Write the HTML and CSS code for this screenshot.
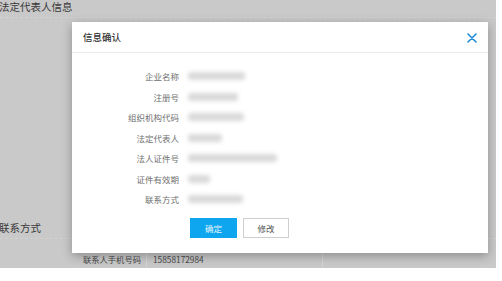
FILE: index.html
```html
<!DOCTYPE html>
<html lang="zh">
<head>
<meta charset="utf-8">
<link rel="stylesheet" href="styles.css">
</head>
<body>
<div class="screen">
  <div class="sec-title">法定代表人信息</div>
  <div class="sec-line"></div>
  <div class="sec-title sec-contact">联系方式</div>
  <div class="sec-line"></div>
  <div class="trow">
    <div class="tcell tlabel">联系人手机号码</div>
    <div class="tcell tvalue">15858172984</div>
  </div>

  <div class="modal">
    <div class="modal-head">
      <span class="modal-title">信息确认</span>
      <svg class="close" width="10" height="10" viewBox="0 0 10 10"><path d="M1 1L9 9M9 1L1 9" stroke="#1f8ad8" stroke-width="1.6" fill="none" stroke-linecap="round"/></svg>
    </div>
    <div class="modal-body">
      <div class="info">
        <div class="lbl">企业名称</div><div class="val"><span class="blur" style="width:57px"></span></div>
        <div class="lbl">注册号</div><div class="val"><span class="blur" style="width:50px"></span></div>
        <div class="lbl">组织机构代码</div><div class="val"><span class="blur" style="width:56px"></span></div>
        <div class="lbl">法定代表人</div><div class="val"><span class="blur" style="width:34px"></span></div>
        <div class="lbl">法人证件号</div><div class="val"><span class="blur" style="width:89px"></span></div>
        <div class="lbl">证件有效期</div><div class="val"><span class="blur" style="width:22px"></span></div>
        <div class="lbl">联系方式</div><div class="val"><span class="blur" style="width:55px"></span></div>
      </div>
      <div class="btns">
        <button class="btn btn-primary">确定</button>
        <button class="btn btn-default">修改</button>
      </div>
    </div>
  </div>
</div>
</body>
</html>
```

FILE: styles.css
```css
html, body {
  margin: 0;
  padding: 0;
  background: #ffffff;
}
body {
  font-family: "Noto Sans CJK SC", "Noto Sans", sans-serif;
}
.screen {
  position: relative;
  width: 496px;
  height: 268px;
  background: #c9c9c9;
  overflow: hidden;
  display: flex;
  flex-direction: column;
}
.sec-title {
  font-size: 10.5px;
  line-height: 14px;
  height: 14px;
  color: #3a3a3a;
  margin-left: -1px;
  white-space: nowrap;
}
.sec-line {
  margin-top: 3px;
  border-bottom: 1px dashed #d2d2d2;
  width: 100%;
}
.sec-contact {
  margin-top: 203px;
}
.trow {
  margin-top: 13px;
  height: 15px;
  display: flex;
  margin-left: 72px;
}
.tcell {
  font-size: 8.3px;
  line-height: 15px;
  color: #4a4a4a;
  white-space: nowrap;
}
.tlabel {
  width: 75px;
  text-align: right;
  padding-right: 5px;
  box-sizing: border-box;
  border-right: 1px solid #d6d6d6;
}
.tvalue {
  width: 176px;
  padding-left: 6px;
  box-sizing: border-box;
  border-right: 1px solid #d6d6d6;
}
.modal {
  position: absolute;
  left: 72px;
  top: 22px;
  width: 416px;
  height: 231px;
  background: #ffffff;
  box-shadow: 0 3px 10px rgba(0, 0, 0, 0.3);
  box-sizing: border-box;
}
.modal-head {
  height: 31px;
  box-sizing: border-box;
  border-bottom: 1px solid #eaeaea;
  display: flex;
  align-items: center;
  justify-content: space-between;
  padding: 0 11px 0 11px;
}
.modal-title {
  font-size: 9.5px;
  font-weight: 500;
  color: #333333;
}
.close {
  display: block;
  margin-top: 2px;
}
.modal-body {
  padding-top: 13px;
}
.info {
  display: grid;
  grid-template-columns: 107px auto;
  column-gap: 9px;
  grid-auto-rows: 20.5px;
  align-items: center;
}
.lbl {
  text-align: right;
  font-size: 8.5px;
  color: #707070;
  white-space: nowrap;
}
.val {
  height: 20.5px;
  display: flex;
  align-items: center;
}
.blur {
  display: block;
  height: 8px;
  background: #d9d9d9;
  border-radius: 3px;
  filter: blur(2px);
}
.btns {
  margin-top: 8px;
  padding-left: 118px;
  display: flex;
  gap: 6px;
}
.btn {
  height: 20px;
  padding: 0;
  font-family: inherit;
  font-size: 8.5px;
  line-height: 18px;
  box-sizing: border-box;
  cursor: pointer;
}
.btn-primary {
  width: 47px;
  background: #0ea6ee;
  border: 1px solid #0ea6ee;
  color: #e8f6ff;
}
.btn-default {
  width: 46px;
  background: #ffffff;
  border: 1px solid #cfcfcf;
  color: #555555;
}
```
